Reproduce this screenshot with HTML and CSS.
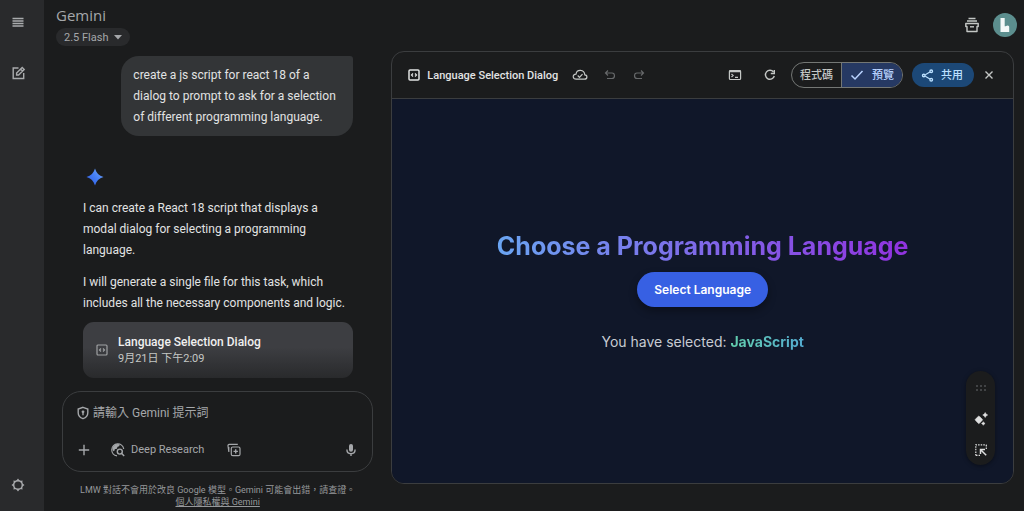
FILE: index.html
```html
<!DOCTYPE html>
<html lang="zh-Hant">
<head>
<meta charset="utf-8">
<meta name="viewport" content="width=device-width, initial-scale=1">
<title>Gemini</title>
<link rel="stylesheet" href="styles.css">
</head>
<body>
<div class="app">
  <nav class="rail">
    <button class="icon-btn" aria-label="選單"><svg viewBox="0 0 18 18"><path d="M3.500 5.500h11M3.500 8h11M3.500 10.500h11M3.500 13h11" stroke-width="1.400"/></svg></button>
    <button class="icon-btn rail-new" aria-label="新的對話"><svg viewBox="0 0 18 18"><path d="M9.500 4H4.200v10.500h10.500V9" stroke-width="1.400"/><path d="M7.600 11V9l5.600-5.600 2 2L9.600 11zM11.500 5l2 2" stroke-width="1.400"/></svg></button>
    <button class="icon-btn rail-settings" aria-label="設定"><svg viewBox="0 0 18 18"><circle cx="9" cy="9" r="4.300" stroke-width="1.400"/><path d="M7.300 4.800 9 2.500l1.700 2.300zM7.300 13.200 9 15.500l1.700-2.300zM4.800 7.300 2.500 9l2.300 1.700zM13.200 7.300 15.500 9l-2.300 1.700zM4.900 7.200l-.5-2.800 2.800.5zM13.100 7.200l.5-2.800-2.800.5zM4.900 10.800l-.5 2.800 2.800-.5zM13.100 10.800l.5 2.800-2.800-.5z" class="fill"/></svg></button>
  </nav>

  <section class="chat">
    <header class="brand">
      <h1>Gemini</h1>
      <button class="model">2.5 Flash <svg viewBox="0 0 8 5"><path d="M0 0h8L4 4.500z" class="fill"/></svg></button>
    </header>
    <div class="thread">
      <p class="bubble">create a js script for react 18 of a dialog to prompt to ask for a selection of different programming language.</p>
      <svg class="spark" viewBox="0 0 18 18" aria-hidden="true"><defs><linearGradient id="spark" x1="0" y1="1" x2="1" y2="0"><stop offset="0" stop-color="#2f57df"/><stop offset=".5" stop-color="#437df4"/><stop offset="1" stop-color="#79adf9"/></linearGradient></defs><path d="M9 .5C10.300 5 13 7.700 17.500 9 13 10.300 10.300 13 9 17.500 7.700 13 5 10.300 .5 9 5 7.700 7.700 5 9 .5z" fill="url(#spark)" stroke="none"/></svg>
      <div class="reply">
        <p>I can create a React 18 script that displays a modal dialog for selecting a programming language.</p>
        <p>I will generate a single file for this task, which includes all the necessary components and logic.</p>
      </div>
      <button class="card">
        <svg viewBox="0 0 14 14"><rect x="2" y="2" width="10" height="10" rx="1"/><path d="M6 5.500 4.500 7 6 8.500M8 5.500 9.500 7 8 8.500"/></svg>
        <span class="card-text"><span class="card-title">Language Selection Dialog</span><span class="card-date">9月21日 下午2:09</span></span>
      </button>
    </div>
    <form class="composer">
      <div class="prompt">
        <svg viewBox="0 0 14 14"><path d="M7 1.300 11.800 3v3.700c0 2.900-1.900 5-4.800 6-2.900-1-4.800-3.100-4.800-6V3z" stroke-width="1.400"/><circle cx="7" cy="5.800" r="1.400" class="fill"/><path d="M7 6.500v2.800" stroke-width="1.400"/></svg>
        <input type="text" aria-label="請輸入 Gemini 提示詞" placeholder="請輸入 Gemini 提示詞">
      </div>
      <div class="tools">
        <button type="button" class="icon-btn" aria-label="新增"><svg viewBox="0 0 18 18"><path d="M9 3.800v10.400M3.800 9h10.400" stroke-width="1.400"/></svg></button>
        <button type="button" class="research"><svg viewBox="0 0 18 18"><path d="M14.700 8A6 6 0 1 0 8 14.900"/><path d="M3.400 7.500C4 4.500 7 2.700 10 3.200c1 .5.600 2-.7 2.300-1 .2-1.100 1-1.200 1.700-.2 1-1.800.5-2.400 1.200-.4.600 0 1.500-.8 1.900-.8-.4-1.400-1.300-1.500-2.800z" class="fill"/><circle cx="10.800" cy="10.600" r="2.500" stroke-width="1.400"/><path d="m12.700 12.500 2.500 2.500" stroke-width="1.400"/></svg>Deep Research</button>
        <button type="button" class="icon-btn" aria-label="Canvas"><svg viewBox="0 0 18 18"><rect x="6.300" y="6" width="8.700" height="8.700" rx="1.500"/><path d="M10.700 8.200v4.400M8.500 10.400h4.400" stroke-width="1.400"/><path d="M3.900 11 3 5Q2.800 3.600 4.200 3.400h8.600M3.800 6v5"/></svg></button>
        <button type="button" class="icon-btn mic" aria-label="麥克風"><svg viewBox="0 0 18 18"><rect x="7" y="3" width="4" height="7.800" rx="2" class="fill"/><path d="M4.900 8.500c0 5.600 8.200 5.600 8.200 0M9 12.700V15" stroke-width="1.400"/></svg></button>
      </div>
    </form>
    <footer class="note">LMW 對話不會用於改良 Google 模型。Gemini 可能會出錯，請查證。<br><a href="#">個人隱私權與 Gemini</a></footer>
  </section>

  <main class="work">
    <div class="account">
      <button class="icon-btn" aria-label="收藏"><svg viewBox="0 0 18 18"><path d="M5.500 2.500h7M4 5h10" stroke-width="1.400"/><path d="M2.800 7.500h12.400v3H14v5H4v-5H2.800z" stroke-width="1.400" stroke-linejoin="round"/><path d="M7 10.800h4" stroke-width="1.400"/></svg></button>
      <button class="avatar" aria-label="帳戶"><svg viewBox="0 0 24 24"><circle cx="12" cy="12" r="12" fill="#5c8e8e" stroke="none"/><path d="M7.500 5h4.200v8.300c1.300.2 1.500-.8 3-.8 1 0 1.500.7 1.500 1.800V19H7.500z" fill="#f3f8f8" stroke="none"/></svg></button>
    </div>
    <section class="canvas">
      <header class="bar">
        <svg class="bright" viewBox="0 0 14 14"><rect x="2" y="2" width="10" height="10" rx="1" stroke-width="1.500"/><path d="M6 5.500 4.500 7 6 8.500M8 5.500 9.500 7 8 8.500"/></svg>
        <h2>Language Selection Dialog</h2>
        <svg class="cloud" viewBox="0 0 18 18"><path d="M5.300 13.200h8.200c3 0 3.300-4 .3-4.300C13.300 2.900 5.700 2.900 5 8.100c-4 .2-3.500 5.100.3 5.100z"/><path d="m6.700 9.500 1.800 1.800 3-3.200"/></svg>
        <button class="icon-btn dim" aria-label="復原"><svg viewBox="0 0 18 18"><path d="M7 4.500 4.500 7 7 9.500M5 7h6c3.300 0 3.300 5.500 0 5.500H6"/></svg></button>
        <button class="icon-btn dim redo" aria-label="重做"><svg viewBox="0 0 18 18"><path d="M11 4.500 13.500 7 11 9.500M13 7H7c-3.300 0-3.300 5.500 0 5.500h5"/></svg></button>
        <button class="icon-btn console" aria-label="主控台"><svg viewBox="0 0 18 18"><rect x="3.400" y="4.500" width="11.200" height="9" rx="1"/><path d="M3.200 5.300h11.600" stroke-width="2"/><path d="m5.500 8 1.600 1.500-1.600 1.500M9 11.300h3"/></svg></button>
        <button class="icon-btn reload" aria-label="重新整理"><svg viewBox="0 0 18 18"><path d="M12.500 6A4.500 4.500 0 1 0 13.300 10" stroke-width="1.400"/><path d="M13.300 4v3.500H9.800" stroke-width="1.400"/></svg></button>
        <div class="switch">
          <button>程式碼</button>
          <button class="on" aria-pressed="true"><svg viewBox="0 0 14 14"><path d="m1.500 7.500 3.500 3.500 7.500-8" stroke-width="1.500"/></svg>預覽</button>
        </div>
        <button class="share"><svg viewBox="0 0 14 14"><path d="m4.600 6.200 5-3M4.600 7.800l5 3"/><circle cx="11" cy="2.500" r="1.400" stroke-width="1.500"/><circle cx="3" cy="7" r="1.400" stroke-width="1.500"/><circle cx="11" cy="11.500" r="1.400" stroke-width="1.500"/></svg>共用</button>
        <button class="icon-btn" aria-label="關閉"><svg viewBox="0 0 18 18"><path d="m5.500 5.500 7 7M12.500 5.500l-7 7" stroke-width="1.400"/></svg></button>
      </header>
      <div class="preview">
        <h3>Choose a Programming Language</h3>
        <button class="select">Select Language</button>
        <p>You have selected: <strong>JavaScript</strong></p>
        <div class="floating">
          <svg class="grip" viewBox="0 0 18 18"><path d="M4 6h2v2H4zM8 6h2v2H8zM12 6h2v2h-2zM4 10h2v2H4zM8 10h2v2H8zM12 10h2v2h-2z" class="fill"/></svg>
          <button class="icon-btn" aria-label="Gemini 功能"><svg viewBox="0 0 18 18"><path d="M6.800 6 9 7.800 10.700 9.800 9 11.800 6.800 13.700 4.700 11.800 3 9.800 4.700 7.800zM13.200 2.500l.9 1.600 1.600.9-1.600.9-.9 1.600-.9-1.600-1.600-.9 1.600-.9zM11.300 11.700l.7 1.100 1.100.7-1.100.7-.7 1.100-.7-1.100-1.100-.7 1.100-.7z" fill="currentColor" stroke-width=".5" stroke-linejoin="round"/></svg></button>
          <button class="icon-btn" aria-label="選取"><svg viewBox="0 0 18 18"><path d="M3.800 14.500V3.800h10.700" stroke-dasharray="1.500 1.100"/><path d="M14.300 4v4M4 14.300h4" stroke-dasharray="1.500 1.100"/><path d="M8.500 13V8.500H13M8.700 8.700l5.500 5.500" stroke-width="1.500"/></svg></button>
        </div>
      </div>
    </section>
  </main>
</div>
</body>
</html>
```
FILE: styles.css
```css
* { box-sizing: border-box; }
body { margin: 0; background: #1b1c1d; color: #e2e3e3; font-family: "Roboto", "Noto Sans CJK TC", sans-serif; font-size: 12px; line-height: 21px; }
h1, h2, h3, p { margin: 0; }
button { display: flex; align-items: center; padding: 0; border: 0; background: none; color: inherit; font: inherit; }
svg { display: block; flex: none; fill: none; stroke: currentColor; stroke-width: 1.2; }
.fill { fill: currentColor; stroke: none; }
.icon-btn svg { width: 18px; height: 18px; }

.app { display: grid; grid-template-columns: 44px 347fr 622fr; min-height: 100vh; padding-right: 10px; }
.rail { display: flex; flex-direction: column; align-items: center; padding: 13px 8px 17px 0; background: #292a2c; color: #a9abad; }
.rail-new { margin-top: 33px; }
.rail-settings { margin-top: auto; }

.chat { display: flex; flex-direction: column; }
.brand { padding: 6px 12px 0; color: #a5a7aa; }
.brand h1 { font: 400 15px/18px "Open Sans", "Roboto", sans-serif; }
.model { gap: 6px; height: 18px; margin-top: 4px; padding: 0 8px; border-radius: 9px; background: #292a2c; font-size: 11px; }
.model svg { width: 8px; height: 5px; }
.thread { display: flex; flex-direction: column; padding: 10px 38px 0 39px; }
.bubble { align-self: flex-end; width: 232px; padding: 9px 12px 8px; border-radius: 18px 3px 18px 18px; background: #333537; }
.spark { width: 18px; height: 18px; margin: 32px 0 0 3px; }
.reply { display: flex; flex-direction: column; gap: 11px; margin-top: 12px; }
.card { gap: 9px; height: 56px; margin-top: 8px; padding: 0 12px; border-radius: 11px; background: linear-gradient(#3d3e42 45%, #292a2c); text-align: left; color: #9fa1a3; }
.card svg { width: 14px; height: 14px; }
.card-text { display: flex; flex-direction: column; }
.card-title { font-weight: 500; line-height: 17px; color: #f0f0f0; }
.card-date { font-size: 11px; line-height: 16px; color: #c4c7c5; }
.composer { display: flex; flex-direction: column; justify-content: space-between; height: 81px; margin: 13px 18px 0; padding: 12px; border: 1px solid #3b3d3f; border-radius: 19px; color: #a5a7aa; }
.prompt { display: flex; align-items: center; gap: 3px; padding-left: 1px; }
.prompt svg { width: 14px; height: 14px; }
.prompt input { flex: 1; min-width: 0; height: 18px; padding: 0; border: 0; outline: 0; background: none; color: inherit; font: inherit; }
.prompt input::placeholder { color: #a5a7aa; opacity: 1; }
.tools { display: flex; align-items: center; }
.research { gap: 4px; margin: 0 21px 0 16px; font-size: 11px; line-height: 18px; }
.research svg { width: 18px; height: 18px; }
.mic { margin-left: auto; }
.note { margin-top: 12px; font-size: 9px; line-height: 12px; text-align: center; color: #96989b; }
.note a { color: inherit; }

.work { display: flex; flex-direction: column; }
.account { display: flex; align-items: center; justify-content: flex-end; gap: 12px; height: 51px; margin-right: -3px; padding-bottom: 1px; color: #c4c7c5; }
.avatar svg { width: 24px; height: 24px; }
.canvas { display: flex; flex: 1; flex-direction: column; margin-bottom: 27px; border: 1px solid #3b3d3f; border-radius: 13px; overflow: hidden; }
.bar { display: flex; align-items: center; height: 47px; padding: 0 15px; border-bottom: 1px solid #3b3d3f; color: #c4c7c5; }
.bright { width: 14px; height: 14px; color: #e2e3e3; }
.bar h2 { margin: 0 13px 0 6px; font-size: 11px; font-weight: 500; color: #e2e3e3; }
.cloud { width: 18px; height: 18px; margin-right: 12px; }
.dim { color: #66686a; }
.redo { margin-left: 11px; }
.console { margin-left: auto; }
.reload { margin: 0 12px 0 17px; }
.switch { display: flex; height: 26px; border: 1px solid #747775; border-radius: 13px; overflow: hidden; font-size: 11px; font-weight: 500; }
.switch button { padding: 0 8px; }
.switch .on { gap: 8px; border-left: 1px solid #747775; background: #263963; color: #b9d3ff; }
.switch svg { width: 14px; height: 14px; }
.share { gap: 7px; height: 24px; margin: 0 6px 0 9px; padding: 0 11px 0 9px; border-radius: 12px; background: #1c4877; color: #bbe0ff; font-size: 11px; font-weight: 500; }
.share svg { width: 13px; height: 13px; }
.preview { position: relative; display: flex; flex: 1; flex-direction: column; align-items: center; justify-content: center; background: #101729; font-family: "Inter", sans-serif; }
.preview h3 { font-size: 25px; line-height: 32px; font-weight: 700; background: linear-gradient(90deg, #6aa5f2, #7f68e8 50%, #9132df); background-clip: text; color: transparent; }
.select { height: 35px; margin: 10px 0 24px; padding: 0 17px; border-radius: 18px; background: #3760e3; box-shadow: 0 4px 8px #0005; color: #fff; font-size: 12px; font-weight: 600; }
.preview p { font-size: 14px; line-height: 21px; color: #c7cbd2; }
.preview strong { background: linear-gradient(90deg, #63d0ad, #54acd2); background-clip: text; color: transparent; font-weight: 700; }
.floating { position: absolute; right: 18px; bottom: 18px; display: flex; flex-direction: column; align-items: center; justify-content: space-between; width: 29px; height: 94px; padding: 8px 0 6px; border-radius: 15px; background: #1b1c1d; box-shadow: 0 1px 4px #0006; color: #dedfdf; }
.grip { width: 18px; height: 18px; color: #414345; }
```
